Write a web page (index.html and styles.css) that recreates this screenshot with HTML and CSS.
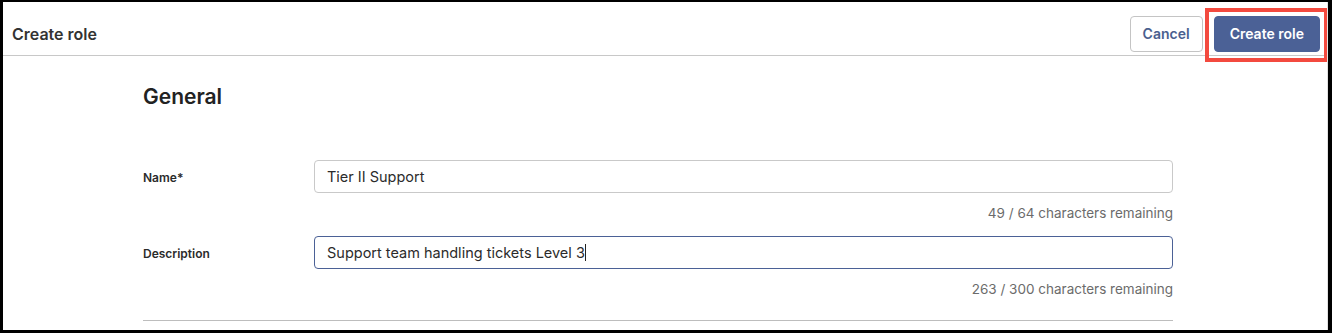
FILE: index.html
```html
<!DOCTYPE html>
<html lang="en">
<head>
    <meta charset="UTF-8">
    <meta name="viewport" content="width=device-width, initial-scale=1.0">
    <title>Create role</title>
    <link rel="stylesheet" href="styles.css">
</head>
<body>
    <div class="frame">
        <header class="topbar">
            <h1 class="page-title">Create role</h1>
            <div class="actions">
                <button class="btn btn-secondary" type="button">Cancel</button>
                <div class="highlight-wrap">
                    <button class="btn btn-primary" type="button">Create role</button>
                    <span class="highlight"></span>
                </div>
            </div>
        </header>

        <main class="content">
            <section class="section">
                <h2 class="section-title">General</h2>

                <div class="field">
                    <label class="field-label" for="role-name">Name*</label>
                    <div class="field-control">
                        <input type="text" id="role-name" class="text-input" value="Tier II Support">
                        <div class="counter">49 / 64 characters remaining</div>
                    </div>
                </div>

                <div class="field">
                    <label class="field-label" for="role-desc">Description</label>
                    <div class="field-control">
                        <div class="text-input focused">Support team handling tickets Level 3<span class="caret"></span></div>
                        <div class="counter">263 / 300 characters remaining</div>
                    </div>
                </div>

                <hr class="divider">
            </section>
        </main>
    </div>
</body>
</html>
```

FILE: styles.css
```css
* {
    box-sizing: border-box;
}
body {
    margin: 0;
    background-color: #000;
    font-family: Inter, "Noto Sans", sans-serif;
    color: #2b2b2b;
}
.frame {
    margin: 2px 4px 3px 3px;
    height: 328px;
    background-color: #fff;
    overflow: hidden;
    border-right: 1px solid #e2e2e2;
}
.topbar {
    display: flex;
    align-items: center;
    justify-content: space-between;
    height: 54px;
    padding: 10px 7px 0 9px;
    border-bottom: 1px solid #c8c8c8;
}
.page-title {
    margin: 0;
    font-size: 16px;
    font-weight: 600;
    color: #333;
}
.actions {
    display: flex;
    align-items: center;
    gap: 11px;
}
.btn {
    font-family: inherit;
    font-size: 14px;
    font-weight: 600;
    height: 36px;
    border-radius: 4px;
    padding: 0 15px;
    cursor: pointer;
}
.btn-secondary {
    background-color: #fff;
    border: 1px solid #c4c4c4;
    color: #4a5f8f;
    padding: 0 12px;
}
.btn-primary {
    background-color: #4b6196;
    border: 1px solid #4b6196;
    color: #fff;
}
.highlight-wrap {
    position: relative;
    display: flex;
}
.highlight {
    position: absolute;
    top: -8px;
    left: -9px;
    right: -8px;
    bottom: -10px;
    border: 4px solid #f34a3f;
    pointer-events: none;
}
.content {
    padding: 0 154px 0 140px;
}
.section-title {
    margin: 28px 0 51px;
    font-size: 21px;
    font-weight: 600;
    color: #222;
}
.field {
    display: flex;
    align-items: flex-start;
}
.field-label {
    width: 171px;
    padding-top: 10px;
    font-size: 12px;
    font-weight: 600;
    color: #2b2b2b;
}
.field-control {
    flex: 1;
}
.text-input {
    display: block;
    width: 100%;
    height: 33px;
    padding: 0 12px;
    border: 1px solid #c9c9c9;
    border-radius: 4px;
    font-family: inherit;
    font-size: 14.5px;
    color: #2b2b2b;
    line-height: 31px;
    background-color: #fff;
}
.text-input.focused {
    border-color: #4b6196;
}
.caret {
    display: inline-block;
    width: 1px;
    height: 17px;
    background-color: #222;
    vertical-align: -3px;
}
.counter {
    text-align: right;
    font-size: 13.5px;
    line-height: 16px;
    color: #6b6b6b;
    margin: 12px 0 15px;
}
.divider {
    margin: 8px 0 0;
    border: 0;
    border-top: 1px solid #bdbdbd;
}
```
